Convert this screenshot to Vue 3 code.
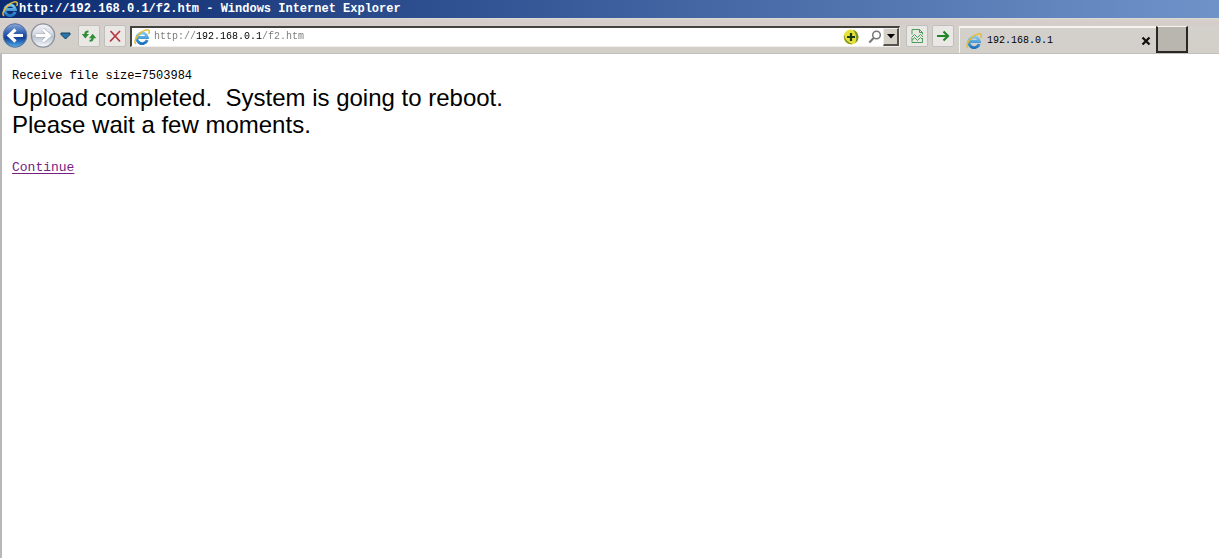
<script setup>
import { ref } from 'vue'

const address = ref('http://192.168.0.1/f2.htm')
</script>

<template>
  <div class="window">
    <svg class="defs" width="0" height="0" aria-hidden="true">
      <defs>
        <linearGradient id="ie-blue" x1="0" y1="0" x2="0" y2="1">
          <stop offset="0" stop-color="#7cc8f0" />
          <stop offset="1" stop-color="#1d72bf" />
        </linearGradient>
        <symbol id="ie" viewBox="0 0 16 16">
          <path d="M13.200 11A5.300 5.300 0 1 1 13.400 8.500H4.200" fill="none" stroke="url(#ie-blue)" stroke-width="2.900" />
          <path d="M2.200 14.800C-.6 13.700 1.600 8.300 5.600 4.600 9.600 1 14.300-.2 15.200 1.900c.4.900.1 2-.5 3.100" fill="none" stroke="#e5bd35" stroke-width="1.500" />
        </symbol>
      </defs>
    </svg>

    <header class="titlebar">
      <svg class="title-icon" aria-hidden="true"><use href="#ie" /></svg>
      <span>http://192.168.0.1/f2.htm - Windows Internet Explorer</span>
    </header>

    <nav class="toolbar" aria-label="Browser">
      <div class="history">
        <button class="plain" aria-label="Back">
          <svg width="27" height="28" viewBox="0 0 27 28">
            <defs>
              <linearGradient id="back-fill" x1="0" y1="0" x2="0" y2="1">
                <stop offset="0" stop-color="#8ba9d8" />
                <stop offset=".4" stop-color="#2d60b2" />
                <stop offset=".6" stop-color="#123f95" />
                <stop offset="1" stop-color="#55b2ee" />
              </linearGradient>
            </defs>
            <circle cx="13" cy="13.500" r="11.800" fill="url(#back-fill)" stroke="#59709d" />
            <path d="M13.500 7.500 7 13.500l6.500 6M7.500 13.500H21" fill="none" stroke="#fff" stroke-width="3.200" />
          </svg>
        </button>
        <button class="plain" aria-label="Forward">
          <svg width="27" height="28" viewBox="0 0 27 28">
            <defs>
              <linearGradient id="next-fill" x1="0" y1="0" x2="0" y2="1">
                <stop offset="0" stop-color="#f4f4f8" />
                <stop offset=".45" stop-color="#d3d8e0" />
                <stop offset=".55" stop-color="#b9c2cd" />
                <stop offset="1" stop-color="#f7fbff" />
              </linearGradient>
            </defs>
            <circle cx="14" cy="13.500" r="11.600" fill="url(#next-fill)" stroke="#8d8f9b" stroke-width="1.300" />
            <path d="M14 7.500l6.500 6-6.500 6M20 13.500H7" fill="none" stroke="#a3adba" stroke-width="4" />
            <path d="M14 7.500l6.500 6-6.500 6M20 13.500H7" fill="none" stroke="#fff" stroke-width="3" />
          </svg>
        </button>
        <button class="plain recent" aria-label="Recent pages">
          <svg width="11" height="8" viewBox="0 0 11 8">
            <path d="M1 1h9v1.500L5.500 7 1 2.500z" fill="#2878ac" stroke="#183f63" />
          </svg>
        </button>
      </div>

      <button class="tool" aria-label="Refresh">
        <svg width="16" height="16" viewBox="0 0 16 16" fill="#2f8f35">
          <path d="M7.500 2.500v2C6 4.500 5.700 5 5.700 6H8l-3.700 4.500L.8 6h2.500C3.300 3.500 4.700 2.500 7.500 2.500z" />
          <path d="M8.500 13.800v-2c1.500 0 1.800-.5 1.800-1.500H8l3.700-4.500 3.500 4.500h-2.500c0 2.500-1.400 3.500-4.200 3.500z" />
        </svg>
      </button>
      <button class="tool" aria-label="Stop">
        <svg width="16" height="16" viewBox="0 0 16 16" fill="none">
          <path d="M3.500 3 13 13.500M13 3 3 13.500" stroke="#b93642" stroke-width="1.700" />
        </svg>
      </button>

      <form class="address" @submit.prevent>
        <svg class="page-icon" aria-hidden="true"><use href="#ie" /></svg>
        <input v-model="address" class="url" type="text" aria-label="Address" spellcheck="false" />
        <button class="plain add" type="button" aria-label="Add">
          <svg width="16" height="16" viewBox="0 0 16 16">
            <circle cx="8" cy="8" r="7.500" fill="#e8e13b" />
            <path d="M10 .8A7.500 7.500 0 0 1 12 14.300C14 11 13.500 5 10 .8M1 5.500c1 5 4 8.500 9 9.500C5 16 .2 12 1 5.500" fill="#79912f" />
            <path d="M8 4v8M4 8h8" stroke="#173b13" stroke-width="2.200" />
          </svg>
        </button>
        <button class="plain search" type="button" aria-label="Search">
          <svg width="14" height="14" viewBox="0 0 14 14" fill="none" stroke="#77777b">
            <circle cx="8.500" cy="5" r="3.800" stroke-width="1.500" />
            <path d="M5.700 8 1.300 12.500" stroke-width="2" />
          </svg>
        </button>
        <button class="dropdown" type="button" aria-label="Show address list">
          <svg width="8" height="5" viewBox="0 0 8 5"><path d="M0 0h8L4 4.500z" fill="#000" /></svg>
        </button>
      </form>

      <button class="tool" aria-label="Compatibility view">
        <svg width="16" height="16" viewBox="0 0 16 16" fill="none" stroke="#4b9b59">
          <path d="M3 6.500V1.500h7.500L13.500 4.500v2M10.500 1.500v3h3M3 10v4.500h10.500V10" />
          <path d="M2.500 9.500 5.500 6.500l3 3 3-3 2.500 2.500M3.500 12 5.500 9.500l3 3 3-3 1.500 1.500" />
        </svg>
      </button>
      <button class="tool" aria-label="Go">
        <svg width="16" height="16" viewBox="0 0 16 16" fill="none" stroke="#23862b" stroke-width="2.200">
          <path d="M2 8h11M8.500 3.500 13 8l-4.500 4.500" />
        </svg>
      </button>

      <div class="tabs">
        <div class="tab">
          <svg class="page-icon" aria-hidden="true"><use href="#ie" /></svg>
          <span class="tab-name">192.168.0.1</span>
          <button class="plain" aria-label="Close tab">
            <svg width="10" height="10" viewBox="0 0 10 10">
              <path d="M1.500 1.500l7 7M8.500 1.500l-7 7" stroke="#111" stroke-width="2.300" />
            </svg>
          </button>
        </div>
        <button class="new-tab" aria-label="New tab"></button>
      </div>
    </nav>

    <main class="page">
      <p class="received">Receive file size=7503984</p>
      <p class="message">Upload completed.&nbsp; System is going to reboot.<br />Please wait a few moments.</p>
      <a class="continue" href="#">Continue</a>
    </main>
  </div>
</template>

<style>
body {
  background: #fff;
}
</style>

<style scoped>
.window {
  display: flex;
  flex-direction: column;
  min-height: 100vh;
  color: #000;
  font-family: "Liberation Mono", monospace;
}

.defs {
  position: absolute;
}

svg {
  display: block;
  flex: none;
}

button {
  flex: none;
  display: flex;
  align-items: center;
  justify-content: center;
  box-sizing: border-box;
  padding: 0;
}

.plain {
  border: 0;
  background: none;
}

.titlebar {
  display: flex;
  align-items: center;
  gap: 1px;
  height: 18px;
  padding-left: 2px;
  background: linear-gradient(90deg, #0b2a70, #6f93c9);
  color: #fff;
  font-size: 12px;
  font-weight: bold;
  line-height: 18px;
  white-space: nowrap;
}

.title-icon,
.page-icon {
  width: 16px;
  height: 16px;
}

.toolbar {
  display: flex;
  align-items: center;
  gap: 4px;
  height: 36px;
  box-sizing: border-box;
  padding-left: 2px;
  border-top: 1px solid #d9d8d4;
  border-bottom: 1px solid #c3bfbd;
  background: linear-gradient(#d5d2cc, #d5ccca 4px, #d4d0cb 8px, #d2cfc9);
}

.history {
  display: flex;
  align-items: center;
  width: 72px;
}

.recent {
  margin-left: 4px;
}

.tool {
  width: 22px;
  height: 22px;
  border: 1px solid #c1bfbc;
  border-radius: 2px;
  background: #e9e8e5;
}

.address {
  flex: 1;
  display: flex;
  align-items: center;
  min-width: 0;
  height: 21px;
  box-sizing: border-box;
  padding-left: 2px;
  margin-right: 2px;
  border: 1px solid #f1eeea;
  border-top: 2px solid #44423f;
  border-left: 2px solid #44423f;
  background: #fff;
}

.url {
  flex: 1;
  min-width: 0;
  padding: 0;
  margin-left: 4px;
  border: 0;
  outline: 0;
  font: 10px/16px "Liberation Mono", monospace;
  background: linear-gradient(90deg, #777 7ch, #000 7ch, #000 18ch, #777 18ch);
  background-clip: text;
  -webkit-text-fill-color: transparent;
}

.search {
  margin: 0 1px 0 9px;
}

.dropdown {
  width: 16px;
  height: 18px;
  border: 1px solid #eee;
  border-right: 2px solid #55524e;
  border-bottom: 2px solid #55524e;
  background: #d4d0c8;
}

.tabs {
  flex: none;
  display: flex;
  align-self: flex-end;
  width: 260px;
  margin-left: 1px;
}

.tab {
  display: flex;
  align-items: center;
  width: 197px;
  height: 27px;
  box-sizing: border-box;
  padding: 0 5px 0 6px;
  border-top: 2px solid #f6f4ed;
  border-left: 1px solid #f6f4ed;
  background: #d3d0cc;
}

.tab-name {
  flex: 1;
  padding-left: 5px;
  font-size: 10px;
}

.new-tab {
  width: 32px;
  height: 27px;
  border: 2px solid #292724;
  border-top: 1px solid #f6f4ed;
  background: #b9b6b0;
}

.page {
  flex: 1;
  padding: 15px 10px;
  border-left: 2px solid #bab7b7;
  background: #fff;
}

.received {
  margin: 0;
  font-size: 12px;
  line-height: 15px;
}

.message {
  margin: 0 0 20px;
  font-family: "Liberation Sans", Arial, sans-serif;
  font-size: 24px;
  line-height: 27px;
}

.continue {
  color: #752184;
  font-size: 13px;
  line-height: 16px;
  text-underline-offset: 2px;
}
</style>
